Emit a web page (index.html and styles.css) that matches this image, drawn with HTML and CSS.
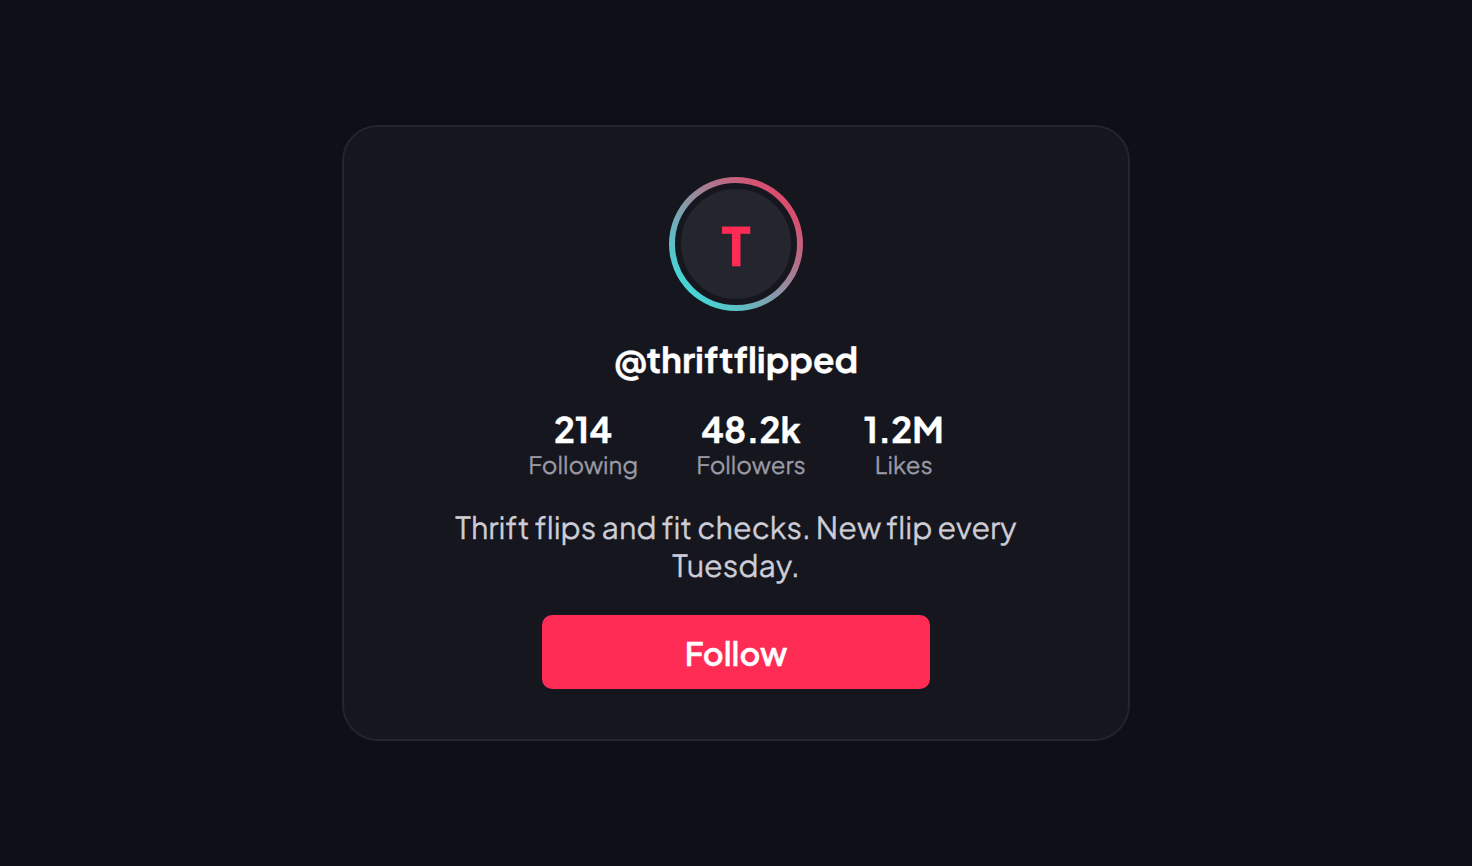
FILE: index.html
```html
<!DOCTYPE html>
<html lang="en">
<head>
    <meta charset="UTF-8">
    <meta name="viewport" content="width=device-width, initial-scale=1.0">
    <title>@thriftflipped</title>
    <link rel="stylesheet" href="styles.css">
</head>
<body>
    <main class="profile-card">
        <div class="avatar-ring">
            <div class="avatar">T</div>
        </div>
        <h1 class="handle">@thriftflipped</h1>
        <ul class="stats">
            <li class="stat">
                <strong class="stat-value">214</strong>
                <span class="stat-label">Following</span>
            </li>
            <li class="stat">
                <strong class="stat-value">48.2k</strong>
                <span class="stat-label">Followers</span>
            </li>
            <li class="stat">
                <strong class="stat-value">1.2M</strong>
                <span class="stat-label">Likes</span>
            </li>
        </ul>
        <p class="bio">Thrift flips and fit checks. New flip every Tuesday.</p>
        <button class="follow-btn" type="button">Follow</button>
    </main>
</body>
</html>
```
FILE: styles.css
```css
* {
    margin: 0;
    padding: 0;
    box-sizing: border-box;
}

body {
    font-family: 'Plus Jakarta Sans', Inter, sans-serif;
    font-variant-ligatures: none;
    text-rendering: geometricPrecision;
    -webkit-text-stroke: 0.3px;
    background-color: #0f0f18;
    color: #ffffff;
    min-height: 100vh;
    display: flex;
    justify-content: center;
    align-items: center;
}

.profile-card {
    width: 788px;
    height: 616px;
    padding: 50px 64px;
    display: flex;
    flex-direction: column;
    align-items: center;
    background-color: #16161e;
    border: 2px solid #24242d;
    border-radius: 36px;
}

/* Gradient ring around the avatar */
.avatar-ring {
    width: 134px;
    height: 134px;
    padding: 6px;
    border-radius: 50%;
    background: linear-gradient(45deg, #25f4ee, #fe2c55);
    flex-shrink: 0;
}

.avatar {
    width: 122px;
    height: 122px;
    padding-top: 2px;
    display: flex;
    justify-content: center;
    align-items: center;
    border: 6px solid #16161e;
    border-radius: 50%;
    background-color: #25252e;
    color: #fe2c55;
    font-size: 52.8px;
    font-weight: 800;
    line-height: 1;
}

.handle {
    margin-top: 25px;
    font-size: 35.2px;
    font-weight: 700;
    line-height: 46px;
}

.stats {
    margin-top: 25px;
    display: flex;
    gap: 58px;
    list-style: none;
}

.stat {
    display: flex;
    flex-direction: column;
    align-items: center;
}

.stat-value {
    font-size: 35.2px;
    font-weight: 700;
    line-height: 44px;
}

.stat-label {
    font-size: 24px;
    line-height: 28px;
    color: #9a9aa5;
}

.bio {
    width: 576px;
    margin-top: 29px;
    font-size: 30.4px;
    line-height: 38px;
    text-align: center;
    color: #cdcdd8;
}

.follow-btn {
    width: 388px;
    height: 74px;
    margin-top: auto;
    padding-top: 1px;
    border: none;
    border-radius: 10px;
    background-color: #fe2c55;
    color: #ffffff;
    font-family: inherit;
    font-size: 32px;
    font-weight: 600;
    cursor: pointer;
}
```
